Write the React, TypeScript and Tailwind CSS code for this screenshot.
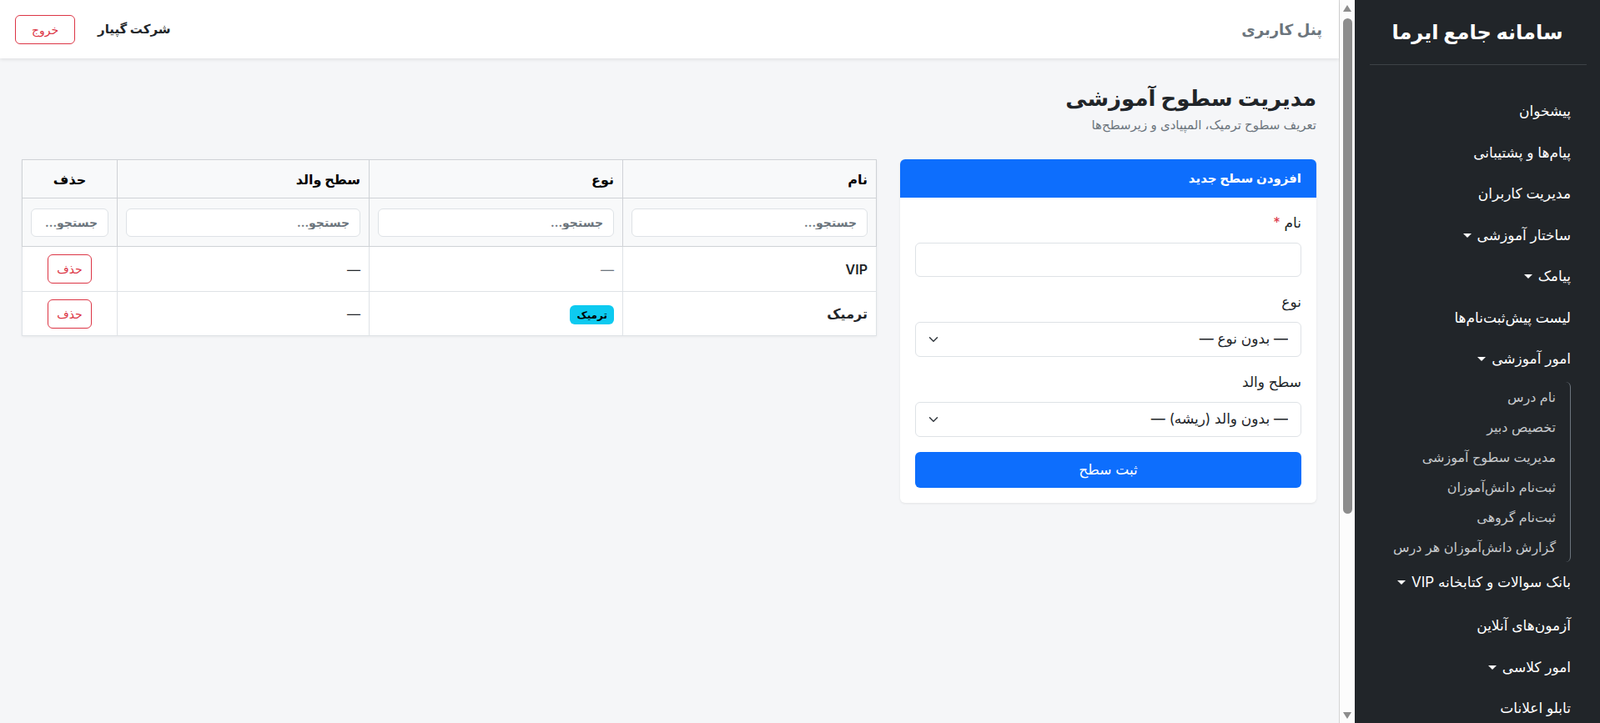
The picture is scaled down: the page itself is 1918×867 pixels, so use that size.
const font = "font-['Inter','DejaVu_Sans',sans-serif]";

function Caret() {
  return (
    <span className="inline-block h-0 w-0 border-x-[5px] border-t-[5px] border-x-transparent border-t-white" />
  );
}

function SideItem({ label, caret }: { label: string; caret?: boolean }) {
  return (
    <div className="flex h-[49.5px] items-center gap-[7px] pr-4 text-[17px] text-white">
      <span>{label}</span>
      {caret && <Caret />}
    </div>
  );
}

// the sidebar's own scrollbar (sits on its left because of rtl)
function ScrollStrip() {
  return (
    <div className="flex h-full w-[19px] shrink-0 flex-col items-center border-l border-[#d4d4d4] bg-[#fcfcfc]">
      <div className="flex h-[19px] items-center">
        <span className="h-0 w-0 border-x-[5.5px] border-b-[8px] border-x-transparent border-b-[#8c8c8c]" />
      </div>
      <div className="mt-[3px] h-[594px] w-[11px] rounded-full bg-[#8c8c8c]" />
      <div className="flex-1" />
      <div className="flex h-[19px] items-center">
        <span className="h-0 w-0 border-x-[5.5px] border-t-[8px] border-x-transparent border-t-[#8c8c8c]" />
      </div>
    </div>
  );
}

function Sidebar() {
  const subItems = [
    "نام درس",
    "تخصیص دبیر",
    "مدیریت سطوح آموزشی",
    "ثبت‌نام دانش‌آموزان",
    "ثبت‌نام گروهی",
    "گزارش دانش‌آموزان هر درس",
  ];

  return (
    <aside className="flex h-screen w-[313px] shrink-0 overflow-hidden bg-[#212529]">
      <div className="min-w-0 flex-1">
        <div className="flex h-[77px] items-center justify-center text-[24px] font-bold text-white">
          سامانه جامع ایرما
        </div>
        <div className="ml-[18px] mr-4 h-px bg-[#3d4246]" />

        <nav className="pr-[19px] pt-[31px]">
          <SideItem label="پیشخوان" />
          <SideItem label="پیام‌ها و پشتیبانی" />
          <SideItem label="مدیریت کاربران" />
          <SideItem label="ساختار آموزشی" caret />
          <SideItem label="پیامک" caret />
          <SideItem label="لیست پیش‌ثبت‌نام‌ها" />
          <SideItem label="امور آموزشی" caret />

          <div className="ml-4 mr-4 mt-[2px] rounded-r-md border-r border-[#6c757d]">
            {subItems.map((s) => (
              <div
                key={s}
                className="flex h-9 items-center pr-[17px] text-[16px] text-[#c6c9cc]"
              >
                {s}
              </div>
            ))}
          </div>

          <SideItem label="بانک سوالات و کتابخانه VIP" caret />
          <div className="h-[3px]" />
          <SideItem label="آزمون‌های آنلاین" />
          <SideItem label="امور کلاسی" caret />
          <SideItem label="تابلو اعلانات" />
        </nav>
      </div>
      <ScrollStrip />
    </aside>
  );
}

function Chevron() {
  return (
    <svg
      viewBox="0 0 16 16"
      className="pointer-events-none absolute left-[15px] top-1/2 h-[12px] w-[14px] -translate-y-1/2"
      fill="none"
      stroke="#343a40"
      strokeWidth="2"
      strokeLinecap="round"
      strokeLinejoin="round"
    >
      <path d="m2 5 6 6 6-6" />
    </svg>
  );
}

function SelectBox({ value }: { value: string }) {
  return (
    <div className="relative">
      <select className="h-[42px] w-full appearance-none rounded-md border border-[#dee2e6] bg-white pl-10 pr-[15px] text-[17px] text-[#212529] outline-none">
        <option>{value}</option>
      </select>
      <Chevron />
    </div>
  );
}

function FieldLabel({ children }: { children: React.ReactNode }) {
  return (
    <label className="mb-3 block h-6 text-[17px] leading-6 text-[#212529]">
      {children}
    </label>
  );
}

function NewLevelCard() {
  return (
    <div className="w-[499px] shrink-0 overflow-hidden rounded-md bg-white shadow-[0_1px_3px_rgba(0,0,0,0.08)]">
      <div className="flex h-[46px] items-center bg-[#0d6efd] px-[18px] text-[15px] font-bold text-white">
        افزودن سطح جدید
      </div>
      <div className="p-[18px]">
        <FieldLabel>
          نام <span className="text-[#dc3545]">*</span>
        </FieldLabel>
        <input className="mb-[18px] block h-[41px] w-full rounded-md border border-[#dee2e6] bg-white px-3 outline-none" />

        <FieldLabel>نوع</FieldLabel>
        <div className="mb-[18px]">
          <SelectBox value="— بدون نوع —" />
        </div>

        <FieldLabel>سطح والد</FieldLabel>
        <div className="mb-[18px]">
          <SelectBox value="— بدون والد (ریشه) —" />
        </div>

        <button className="h-[43px] w-full rounded-md bg-[#0d6efd] text-[17px] text-white">
          ثبت سطح
        </button>
      </div>
    </div>
  );
}

function DeleteButton() {
  return (
    <button className="h-[35px] w-[53px] rounded-md border border-[#dc3545] text-[14px] text-[#dc3545]">
      حذف
    </button>
  );
}

function SearchInput() {
  return (
    <input
      placeholder="جستجو..."
      className="block h-[34px] w-full rounded-md border border-[#dee2e6] bg-white px-3 text-[14px] outline-none placeholder:text-[#6c757d]"
    />
  );
}

function LevelsTable() {
  const head = "border border-[#cfd2d6] px-[10px] text-[16px] font-bold text-black";
  const filter = "border border-[#cfd2d6] px-[10px]";
  const cell = "border border-[#dee2e6] px-[10px]";

  return (
    <div className="min-w-0 flex-1">
      <table className="w-full table-fixed border-collapse bg-white shadow-[0_1px_3px_rgba(0,0,0,0.06)]">
        <colgroup>
          <col className="w-[304px]" />
          <col className="w-[304px]" />
          <col className="w-[302px]" />
          <col className="w-[114px]" />
        </colgroup>
        <thead className="bg-[#f8f9fa]">
          <tr className="h-[46px]">
            <th className={`${head} text-right`}>نام</th>
            <th className={`${head} text-right`}>نوع</th>
            <th className={`${head} text-right`}>سطح والد</th>
            <th className={`${head} text-center`}>حذف</th>
          </tr>
          <tr className="h-[58px]">
            <th className={filter}>
              <SearchInput />
            </th>
            <th className={filter}>
              <SearchInput />
            </th>
            <th className={filter}>
              <SearchInput />
            </th>
            <th className={filter}>
              <SearchInput />
            </th>
          </tr>
        </thead>
        <tbody className="text-[16px] text-[#212529]">
          <tr className="h-[54px]">
            <td className={`${cell} text-right font-semibold`}>VIP</td>
            <td className={`${cell} text-right text-[#6c757d]`}>—</td>
            <td className={`${cell} text-right`}>—</td>
            <td className={`${cell} text-center`}>
              <DeleteButton />
            </td>
          </tr>
          <tr className="h-[53px]">
            <td className={`${cell} text-right font-semibold`}>ترمیک</td>
            <td className={`${cell} text-right`}>
              <span className="inline-block rounded-md bg-[#0dcaf0] px-2 py-[3px] text-[12px] font-bold leading-[17px] text-black">
                ترمیک
              </span>
            </td>
            <td className={`${cell} text-right`}>—</td>
            <td className={`${cell} text-center`}>
              <DeleteButton />
            </td>
          </tr>
        </tbody>
      </table>
    </div>
  );
}

export default function App() {
  return (
    <div dir="rtl" className={`flex h-screen w-full overflow-hidden ${font}`}>
      <Sidebar />

      <div className="flex min-w-0 flex-1 flex-col bg-[#f5f6f8]">
        <header className="flex h-[70px] shrink-0 items-center justify-between bg-white pl-[18px] pr-5 shadow-[0_2px_4px_rgba(0,0,0,0.08)]">
          <div className="text-[18px] font-semibold text-[#6c757d]">پنل کاربری</div>
          <div className="flex items-center gap-[27px]">
            <span className="text-[15px] font-bold text-[#212529]">شرکت گپیار</span>
            <button className="h-[35px] w-[72px] rounded-md border border-[#dc3545] bg-white text-[14px] text-[#dc3545]">
              خروج
            </button>
          </div>
        </header>

        <main className="px-[27px] pt-[31px]">
          <h1 className="text-[26px] font-bold leading-[34px] text-[#212529]">
            مدیریت سطوح آموزشی
          </h1>
          <p className="mt-1 text-[15px] leading-[21px] text-[#6c757d]">
            تعریف سطوح ترمیک، المپیادی و زیرسطح‌ها
          </p>

          <div className="mt-[31px] flex items-start gap-[28px]">
            <NewLevelCard />
            <LevelsTable />
          </div>
        </main>
      </div>
    </div>
  );
}
